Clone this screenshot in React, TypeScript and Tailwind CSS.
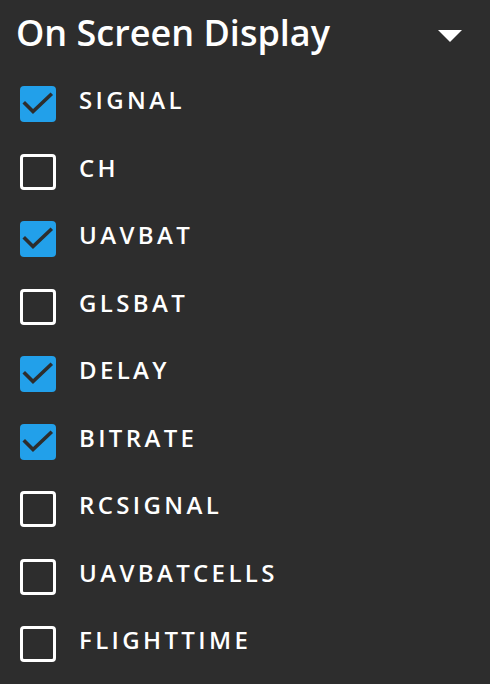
import { useState } from "react";

const items = [
  ["SIGNAL", true],
  ["CH", false],
  ["UAVBAT", true],
  ["GLSBAT", false],
  ["DELAY", true],
  ["BITRATE", true],
  ["RCSIGNAL", false],
  ["UAVBATCELLS", false],
  ["FLIGHTTIME", false],
] as const;

function Check({ on }: { on: boolean }) {
  if (!on) return <span className="block h-9 w-9 shrink-0 rounded-[4px] border-[3px] border-white" />;
  return (
    <span className="grid h-9 w-9 shrink-0 place-items-center rounded-[4px] bg-[#22a0ea]">
      <svg width="36" height="36" viewBox="0 0 36 36" fill="none">
        <path d="M5 17.5 L13 25.5 L30.5 9" stroke="#2d2d2d" strokeWidth="3.6" strokeLinecap="square" />
      </svg>
    </span>
  );
}

export default function App() {
  const [state, setState] = useState<boolean[]>(items.map(([, on]) => on));

  return (
    <div className="h-[684px] w-[490px] overflow-hidden bg-[#2d2d2d] text-white" style={{ fontFamily: '"Open Sans", sans-serif' }}>
      <div className="flex h-[70px] items-start justify-between pl-4 pr-7 pt-[9px]">
        <h1 className="text-[36px] font-semibold leading-[48px]">On Screen Display</h1>
        <svg width="24" height="12" viewBox="0 0 24 12" className="mt-[21px]">
          <path d="M0 0 H24 L12 12 Z" fill="white" />
        </svg>
      </div>
      <div className="flex flex-col pl-5 pt-4">
        {items.map(([label], i) => (
          <button
            key={label}
            type="button"
            onClick={() => setState((s) => s.map((v, j) => (j === i ? !v : v)))}
            className="flex h-[67.5px] items-start gap-[23px] text-left"
          >
            <Check on={state[i]} />
            <span className="text-[24px] font-[550] leading-[27px] tracking-[0.14em]">{label}</span>
          </button>
        ))}
      </div>
    </div>
  );
}
